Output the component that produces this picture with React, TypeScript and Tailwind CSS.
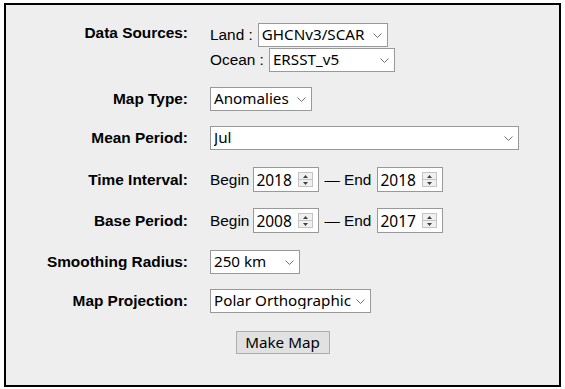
import React from "react";

function Chevron() {
  return (
    <svg className="mr-[5px] shrink-0" width="9" height="5" viewBox="0 0 9 5">
      <path d="M0.5 0.5 L4.5 4.5 L8.5 0.5" fill="none" stroke="#707070" strokeWidth="1" />
    </svg>
  );
}

function Select({ value, options, width }: { value: string; options: string[]; width: string }) {
  return (
    <div className={`flex h-[24px] items-center border border-[#999999] bg-white ${width}`}>
      <select
        defaultValue={value}
        className="h-full min-w-0 flex-1 appearance-none bg-transparent pl-[3px] text-[15.2px] leading-none text-black outline-none font-['Noto_Sans',sans-serif]"
      >
        {options.map((o) => (
          <option key={o}>{o}</option>
        ))}
      </select>
      <Chevron />
    </div>
  );
}

function Spinner() {
  return (
    <div className="mr-[5px] flex h-[15px] w-[15px] shrink-0 flex-col border border-[#c4c4c4] bg-[#f0f0f0]">
      <div className="flex flex-1 items-center justify-center border-b border-[#c4c4c4]">
        <svg width="5" height="3" viewBox="0 0 5 3">
          <path d="M0 3 L2.5 0 L5 3 Z" fill="#404040" />
        </svg>
      </div>
      <div className="flex flex-1 items-center justify-center">
        <svg width="5" height="3" viewBox="0 0 5 3">
          <path d="M0 0 L2.5 3 L5 0 Z" fill="#404040" />
        </svg>
      </div>
    </div>
  );
}

function NumberBox({ value }: { value: string }) {
  return (
    <div className="flex h-[25px] w-[66px] items-center border border-[#999999] bg-white">
      <input
        type="text"
        defaultValue={value}
        className="h-full w-full min-w-0 flex-1 bg-transparent pl-[2px] text-[15.5px] leading-none text-black outline-none font-['Noto_Sans',sans-serif]"
      />
      <Spinner />
    </div>
  );
}

function Label({ children }: { children: React.ReactNode }) {
  return (
    <div className="w-[182px] shrink-0 text-right text-[15.4px] font-bold text-black font-['Liberation_Sans',Arial,sans-serif]">
      {children}
    </div>
  );
}

export default function App() {
  const months = ["Jan", "Feb", "Mar", "Apr", "May", "Jun", "Jul", "Aug", "Sep", "Oct", "Nov", "Dec"];
  return (
    <div className="h-[389px] w-[565px] bg-white pl-[4px] pt-[3px]">
      <div className="flex h-[384px] w-[557px] flex-col border-2 border-black bg-[#eeeeee] text-[15.4px] text-black font-['Liberation_Sans',Arial,sans-serif]">
        {/* Data Sources */}
        <div className="mt-[18px] flex items-start">
          <div className="w-[182px] shrink-0 text-right text-[15.4px] font-bold leading-[20px]">Data Sources:</div>
          <div className="ml-[22px] flex flex-col">
            <div className="flex h-[24px] items-center">
              <span className="mr-[5px]">Land :</span>
              <Select value="GHCNv3/SCAR" options={["GHCNv3/SCAR", "GHCNv3/ERSST", "None"]} width="w-[130px]" />
            </div>
            <div className="mt-[1px] flex h-[24px] items-center">
              <span className="mr-[5px]">Ocean :</span>
              <Select value="ERSST_v5" options={["ERSST_v5", "ERSST_v4", "None"]} width="w-[126px]" />
            </div>
          </div>
        </div>

        {/* Map Type */}
        <div className="mt-[15px] flex items-center">
          <Label>Map Type:</Label>
          <div className="ml-[22px]">
            <Select value="Anomalies" options={["Anomalies", "Trends"]} width="w-[102px]" />
          </div>
        </div>

        {/* Mean Period */}
        <div className="mt-[15px] flex items-center">
          <Label>Mean Period:</Label>
          <div className="ml-[22px]">
            <Select value="Jul" options={months} width="w-[309px]" />
          </div>
        </div>

        {/* Time Interval */}
        <div className="mt-[17px] flex items-center">
          <Label>Time Interval:</Label>
          <div className="ml-[22px] flex items-center">
            <span>Begin</span>
            <div className="ml-[4px]">
              <NumberBox value="2018" />
            </div>
            <span className="ml-[5px]">— End</span>
            <div className="ml-[6px]">
              <NumberBox value="2018" />
            </div>
          </div>
        </div>

        {/* Base Period */}
        <div className="mt-[16px] flex items-center">
          <Label>Base Period:</Label>
          <div className="ml-[22px] flex items-center">
            <span>Begin</span>
            <div className="ml-[4px]">
              <NumberBox value="2008" />
            </div>
            <span className="ml-[5px]">— End</span>
            <div className="ml-[6px]">
              <NumberBox value="2017" />
            </div>
          </div>
        </div>

        {/* Smoothing Radius */}
        <div className="mt-[17px] flex items-center">
          <Label>Smoothing Radius:</Label>
          <div className="ml-[22px]">
            <Select value="250 km" options={["250 km", "1200 km"]} width="w-[90px]" />
          </div>
        </div>

        {/* Map Projection */}
        <div className="mt-[15px] flex items-center">
          <Label>Map Projection:</Label>
          <div className="ml-[22px]">
            <Select value="Polar Orthographic" options={["Polar Orthographic", "Robinson", "Equirectangular"]} width="w-[161px]" />
          </div>
        </div>

        <button
          type="button"
          className="mx-auto mt-[18px] flex h-[23px] w-[94px] items-center justify-center border border-[#adadad] bg-[#e1e1e1] text-[15.2px] leading-none text-black font-['Noto_Sans',sans-serif]"
        >
          Make Map
        </button>
      </div>
    </div>
  );
}
